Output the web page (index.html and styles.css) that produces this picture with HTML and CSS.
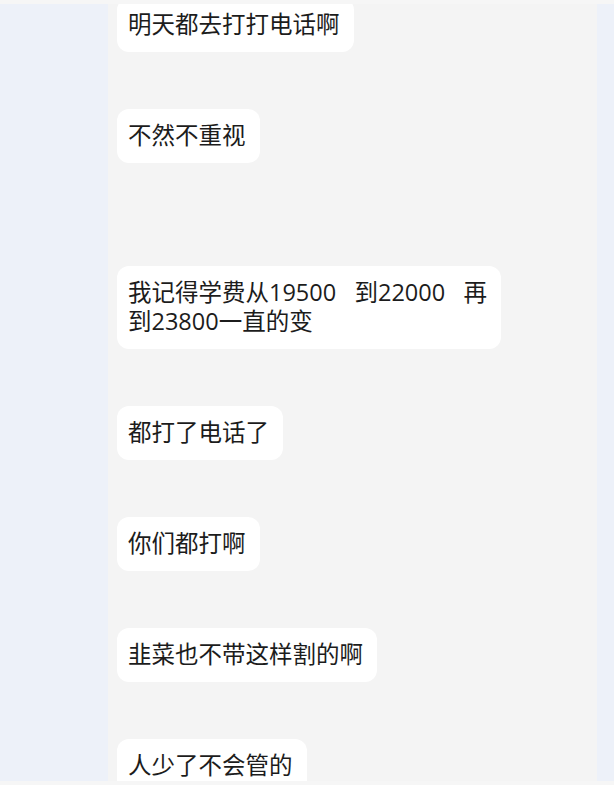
FILE: index.html
```html
<!DOCTYPE html>
<html lang="zh-CN">
<head>
    <meta charset="UTF-8">
    <meta name="viewport" content="width=device-width, initial-scale=1.0">
    <title>群聊</title>
    <link rel="stylesheet" href="styles.css">
</head>
<body>
    <div class="screen">
        <div class="edge"></div>
        <div class="chat">
            <aside class="side"></aside>
            <main class="messages">
                <div class="bubble first">明天都去打打电话啊</div>
                <div class="bubble">不然不重视</div>
                <div class="bubble after-gap">我记得学费从19500   到22000   再<br>到23800一直的变</div>
                <div class="bubble">都打了电话了</div>
                <div class="bubble">你们都打啊</div>
                <div class="bubble">韭菜也不带这样割的啊</div>
                <div class="bubble">人少了不会管的</div>
            </main>
            <aside class="side side-right"></aside>
        </div>
        <div class="edge"></div>
    </div>
</body>
</html>
```

FILE: styles.css
```css
* {
    box-sizing: border-box;
    margin: 0;
    padding: 0;
}

body {
    font-family: 'Open Sans', 'Noto Sans CJK SC', sans-serif;
    background-color: #f6f6f6;
    overflow: hidden;
}

.screen {
    display: flex;
    flex-direction: column;
    height: 785px;
}

.edge {
    height: 4px;
    background-color: #f6f6f6;
}

.chat {
    flex: 1;
    display: flex;
    overflow: hidden;
    background-color: #f4f4f4;
}

.side {
    width: 108px;
    background-color: #edf1f9;
}

.side-right {
    width: 17px;
    margin-left: auto;
}

.messages {
    flex: 1;
    display: flex;
    flex-direction: column;
    align-items: flex-start;
    gap: 57px;
    padding-left: 9px;
}

.bubble {
    background-color: #ffffff;
    border-radius: 12px;
    padding: 12px 14px 13px 11px;
    font-size: 23.5px;
    line-height: 29px;
    color: #1c1c1c;
    white-space: pre;
}

.bubble.first {
    margin-top: -6px;
}

.bubble.after-gap {
    margin-top: 46px;
}
```
